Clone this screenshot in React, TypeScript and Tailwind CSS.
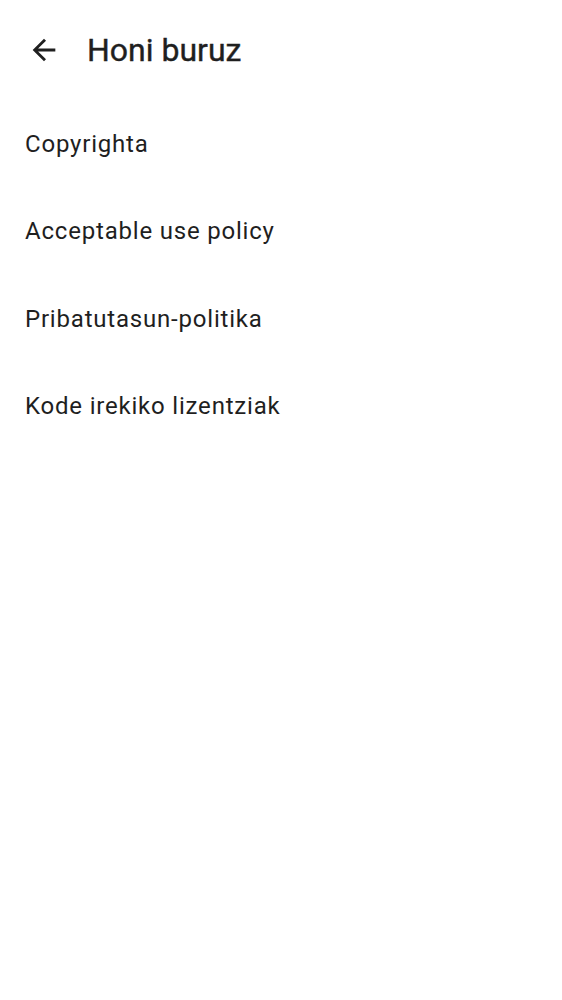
const ITEMS = ['Copyrighta', 'Acceptable use policy', 'Pribatutasun-politika', 'Kode irekiko lizentziak']

function BackArrow() {
  return (
    <svg viewBox="0 0 24 24" className="h-[34px] w-[34px] fill-current" aria-hidden>
      <path d="M20 11H7.83l5.59-5.59L12 4l-8 8 8 8 1.41-1.41L7.83 13H20v-2z" />
    </svg>
  )
}

export default function App() {
  return (
    <div className="min-h-screen w-full bg-white text-[#1f1f1f] font-['Roboto',sans-serif]">
      <header className="flex h-[100px] items-center pl-[27px]">
        <BackArrow />
        <h1 className="ml-[26px] text-[32px] font-normal leading-none [-webkit-text-stroke:0.4px_#1f1f1f]">Honi buruz</h1>
      </header>
      <ul>
        {ITEMS.map((item) => (
          <li key={item} className="flex h-[87.5px] items-center px-[25px] text-[24px] leading-none tracking-[0.8px]">
            {item}
          </li>
        ))}
      </ul>
    </div>
  )
}
